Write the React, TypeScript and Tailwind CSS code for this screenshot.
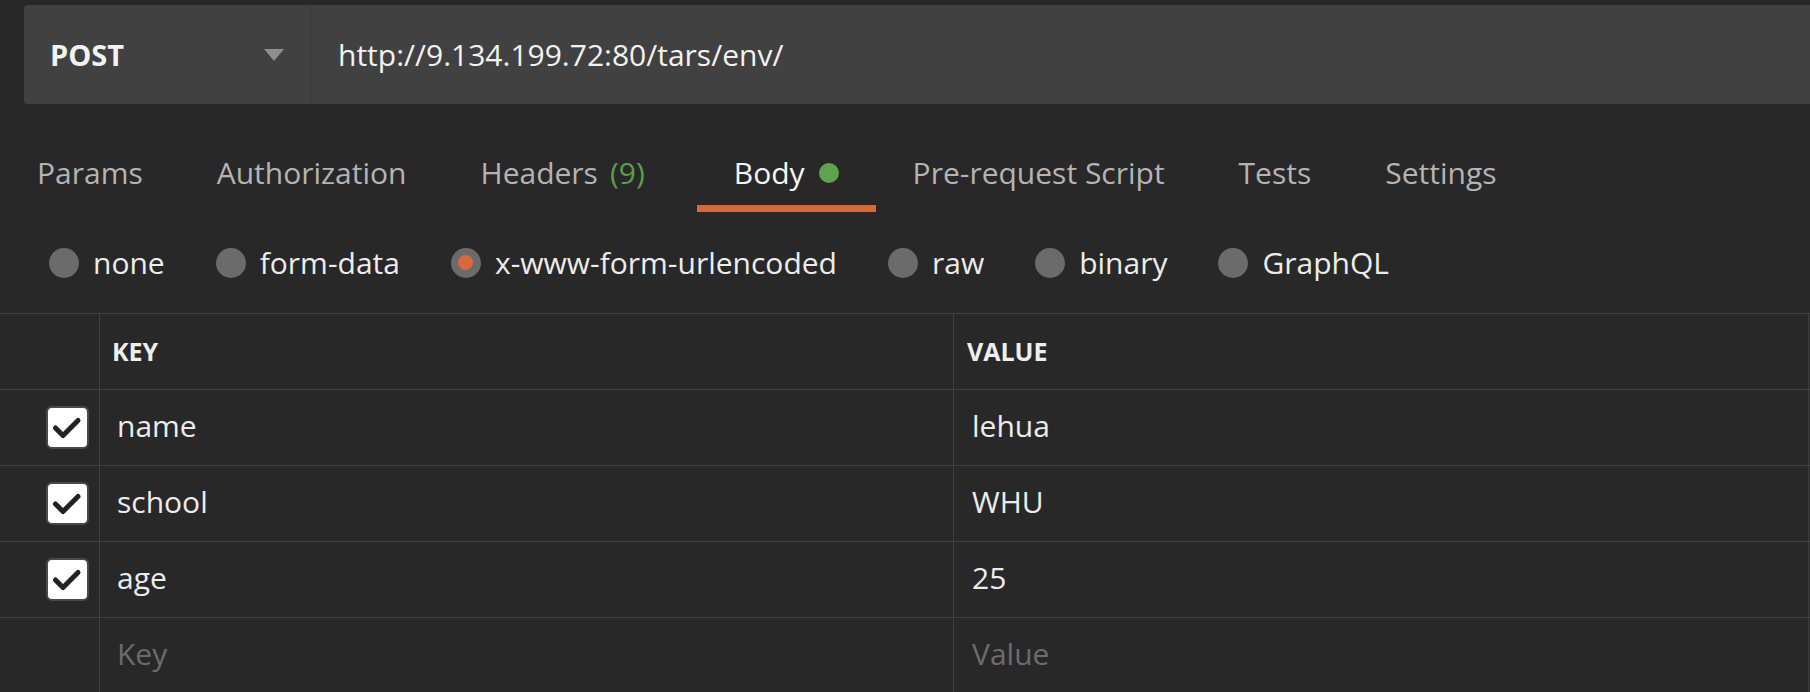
import React from "react";

const tabs = [
  { label: "Params" },
  { label: "Authorization" },
  { label: "Headers", count: "(9)" },
  { label: "Body", active: true, dot: true },
  { label: "Pre-request Script" },
  { label: "Tests" },
  { label: "Settings" },
];

const radios = [
  { label: "none" },
  { label: "form-data" },
  { label: "x-www-form-urlencoded", selected: true },
  { label: "raw" },
  { label: "binary" },
  { label: "GraphQL" },
];

const rows = [
  { key: "name", value: "lehua" },
  { key: "school", value: "WHU" },
  { key: "age", value: "25" },
];

function Check() {
  return (
    <div className="w-[43px] h-[43px] rounded-[6px] border-2 border-[#4a4a4a] bg-white">
      <svg viewBox="0 0 39 39" className="w-[39px] h-[39px]">
        <polyline
          points="7.5,20 15,27.5 30,12.5"
          fill="none"
          stroke="#222222"
          strokeWidth="5"
          strokeLinecap="round"
          strokeLinejoin="round"
        />
      </svg>
    </div>
  );
}

export default function App() {
  return (
    <div className="w-[1810px] h-[692px] overflow-hidden bg-[#282828] font-['Open_Sans',sans-serif] text-[#ededed]">
      {/* URL bar */}
      <div className="pl-[24px] pt-[5px]">
        <div className="flex h-[99px] w-[1800px] rounded-l-[4px] bg-[#414141]">
          <div className="flex w-[287px] items-center justify-between border-r border-[#383838] pl-[26px] pr-[26px]">
            <span className="text-[29px] font-bold text-[#f2f2f2]">POST</span>
            <svg width="20" height="12" viewBox="0 0 20 12">
              <polygon points="0,0 20,0 10,12" fill="#8f8f8f" />
            </svg>
          </div>
          <div className="flex items-center pl-[27px] text-[30px] text-[#f2f2f2]">
            http://9.134.199.72:80/tars/env/
          </div>
        </div>
      </div>

      {/* Tabs */}
      <div className="flex">
        {tabs.map((t) => (
          <div
            key={t.label}
            className={
              "flex items-center pl-[37px] pt-[50px] pb-[13px] border-b-[7px] text-[30px] leading-[38px] " +
              (t.count ? "pr-[52px] " : "pr-[37px] ") +
              (t.active ? "border-[#d46a3c] text-[#f5f5f5]" : "border-transparent text-[#b4b4b4]")
            }
          >
            <span>{t.label}</span>
            {t.count && <span className="ml-[12px] text-[#5b9e4b]">{t.count}</span>}
            {t.dot && <span className="ml-[14px] inline-block h-[20px] w-[20px] rounded-full bg-[#5fa24f]" />}
          </div>
        ))}
      </div>

      {/* Body type radios */}
      <div className="flex h-[101px] items-center gap-[51px] pl-[49px]">
        {radios.map((r) => (
          <div key={r.label} className="flex items-center gap-[14px]">
            <div className="flex h-[30px] w-[30px] items-center justify-center rounded-full bg-[#6b6b6b]">
              {r.selected && <div className="h-[15px] w-[15px] rounded-full bg-[#d8693a]" />}
            </div>
            <span className="text-[30px] leading-[38px] text-[#ececec]">{r.label}</span>
          </div>
        ))}
      </div>

      {/* Table */}
      <div className="border-t border-[#404040]">
        <div className="flex h-[76px] border-b border-[#404040]">
          <div className="w-[100px] border-r border-[#404040]" />
          <div className="flex w-[854px] items-center border-r border-[#404040] pl-[12px] text-[25px] font-bold text-[#eeeeee]">
            KEY
          </div>
          <div className="flex w-[855px] items-center border-r border-[#404040] pl-[13px] text-[25px] font-bold text-[#eeeeee]">
            VALUE
          </div>
        </div>
        {rows.map((r) => (
          <div key={r.key} className="flex h-[76px] border-b border-[#404040]">
            <div className="flex w-[100px] items-center border-r border-[#404040] pl-[46px]">
              <Check />
            </div>
            <div className="flex w-[854px] items-center border-r border-[#404040] pl-[17px] pb-[5px] text-[30px] text-[#ececec]">
              {r.key}
            </div>
            <div className="flex w-[855px] items-center border-r border-[#404040] pl-[18px] pb-[5px] text-[30px] text-[#ececec]">
              {r.value}
            </div>
          </div>
        ))}
        <div className="flex h-[76px] border-b border-[#404040]">
          <div className="w-[100px] border-r border-[#404040]" />
          <div className="flex w-[854px] items-center border-r border-[#404040] pl-[17px] pb-[5px] text-[30px] text-[#6c6c6c]">
            Key
          </div>
          <div className="flex w-[855px] items-center border-r border-[#404040] pl-[18px] pb-[5px] text-[30px] text-[#6c6c6c]">
            Value
          </div>
        </div>
      </div>
    </div>
  );
}
